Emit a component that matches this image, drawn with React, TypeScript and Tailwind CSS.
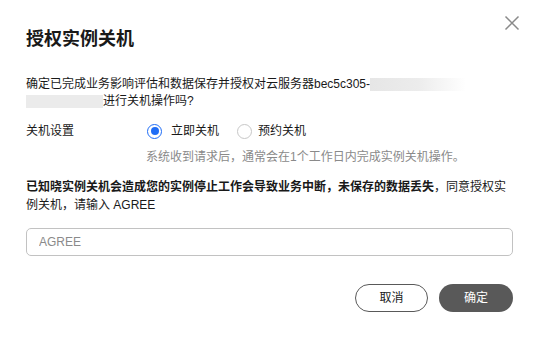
const font = { fontFamily: '"Liberation Sans", "Noto Sans CJK SC", sans-serif' };

export default function App() {
  return (
    <div className="relative w-[539px] h-[339px] bg-white text-[#191919] overflow-hidden" style={font}>
      <button className="absolute top-[15px] left-[504px] text-[#8a8a8a]">
        <svg width="16" height="16" viewBox="0 0 16 16" fill="none" stroke="currentColor" strokeWidth="1.5">
          <path d="M1.5 1.5 L14.5 14.5 M14.5 1.5 L1.5 14.5" />
        </svg>
      </button>

      <div className="flex flex-col px-[26px] pt-[26px]">
        <h2 className="text-[18px] leading-[26px] font-bold text-[#191919]">授权实例关机</h2>

        <p className="mt-[24px] text-[12px] leading-[17px]">
          确定已完成业务影响评估和数据保存并授权对云服务器bec5c305-
          <span className="inline-block align-middle w-[96px] h-[13px] bg-gradient-to-r from-[#e6e6e6] via-[#ececec] to-white" />
          <br />
          <span className="inline-block align-middle w-[77px] h-[13px] bg-[#ebebeb]" />
          进行关机操作吗?
        </p>

        <div className="mt-[12px] flex items-center text-[12px] leading-[18px]">
          <span className="w-[121px]">关机设置</span>
          <label className="flex items-center gap-[9px]">
            <span className="w-[15px] h-[15px] rounded-full border border-[#1f6df6] flex items-center justify-center">
              <span className="w-[8px] h-[8px] rounded-full bg-[#1f6df6]" />
            </span>
            <span>立即关机</span>
          </label>
          <label className="ml-[18px] flex items-center gap-[6px]">
            <span className="w-[15px] h-[15px] rounded-full border border-[#c7c7c7]" />
            <span>预约关机</span>
          </label>
        </div>

        <p className="mt-[8px] pl-[120px] text-[12px] leading-[18px] text-[#8a8a8a]">
          系统收到请求后，通常会在1个工作日内完成实例关机操作。
        </p>

        <p className="mt-[12px] text-[12px] leading-[18px]">
          <b>已知晓实例关机会造成您的实例停止工作会导致业务中断，未保存的数据丢失</b>，同意授权实例关机，请输入 AGREE
        </p>

        <input
          className="mt-[14px] h-[28px] w-full rounded-[5px] border border-[#c2c2c2] px-[12px] text-[12px] outline-none placeholder:text-[#8a8a8a]"
          placeholder="AGREE"
        />

        <div className="mt-[28px] flex justify-end gap-[11px]">
          <button className="w-[73px] h-[28px] rounded-full border border-[#595959] text-[12px] text-[#191919]">
            取消
          </button>
          <button className="w-[74px] h-[28px] rounded-full bg-[#595959] text-[12px] text-white">
            确定
          </button>
        </div>
      </div>
    </div>
  );
}
